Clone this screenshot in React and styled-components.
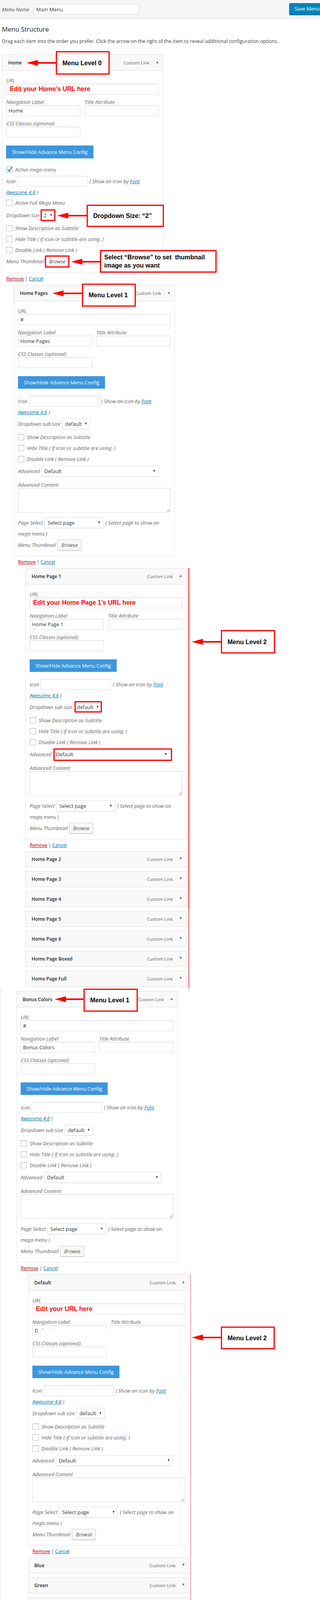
import React from 'react'
import styled, { createGlobalStyle } from 'styled-components'

const GlobalStyle = createGlobalStyle`
  html, body { margin: 0; padding: 0; background: #fff; }
  body { font-family: "Open Sans", "Noto Sans", sans-serif; color: #444; }
  *, *::before, *::after { box-sizing: border-box; }
`

const Page = styled.div`
  position: relative;
  width: 820px;
  height: 4192px;
  overflow: hidden;
  background: #fff;
`

const TopBar = styled.div`
  display: flex;
  align-items: center;
  height: 48px;
  padding-left: 5px;
  background: #f5f5f5;
  border-bottom: 1px solid #dedede;
`

const NameLabel = styled.span`
  width: 81px;
  font-size: 13px;
  font-style: italic;
  color: #555;
`

const NameInput = styled.input`
  width: 270px;
  height: 26px;
  padding: 0 6px;
  border: 1px solid #ddd;
  background: #fff;
  font-family: inherit;
  font-size: 13px;
  color: #32373c;
  outline: none;
`

const SaveButton = styled.button`
  margin-left: auto;
  margin-right: -12px;
  margin-top: -2px;
  width: 91px;
  height: 30px;
  padding: 0 0 0 13px;
  text-align: left;
  background: #0085ba;
  border: 1px solid #0073aa;
  border-bottom-color: #006799;
  border-radius: 3px;
  box-shadow: 0 1px 0 #006799;
  color: #fff;
  font-family: inherit;
  font-size: 12.5px;
`

const Section = styled.div`
  padding-left: 5px;
`

const LowerSection = styled.div`
  margin-left: 1px;
  padding: 7px 0 0 10px;
  border-left: 1px solid #dcdcdc;
`

const Heading = styled.h2`
  margin: 16px 0 0;
  font-size: 16.5px;
  font-weight: 400;
  line-height: 22px;
  color: #23282d;
`

const Intro = styled.p`
  margin: 11px 0 24px;
  font-size: 12.4px;
  line-height: 18px;
  color: #444;
`

const Item = styled.div`
  position: relative;
  width: 413px;
  margin-left: ${p => p.$indent || 0}px;
`

const Handle = styled.div`
  display: flex;
  align-items: center;
  height: ${p => (p.$open ? 42 : 41)}px;
  padding: 0 11px 0 15px;
  background: #f9f9f9;
  border: 1px solid #dfdfdf;
`

const ItemTitle = styled.span`
  flex: 1;
  font-size: 12px;
  font-weight: 600;
  color: #23282d;
`

const ItemType = styled.span`
  font-size: 11.5px;
  color: #666;
`

const Toggle = styled.span`
  width: 0;
  height: 0;
  margin: -3px 0 0 17px;
  border-left: 3.5px solid transparent;
  border-right: 3.5px solid transparent;
  ${p => (p.$open ? 'border-bottom: 6px solid #72777c;' : 'border-top: 6px solid #72777c;')}
`

const Settings = styled.div`
  padding: 17px 10px ${p => p.$pb ?? 14}px;
  border: 1px solid #e5e5e5;
  border-top: none;
  background: #fff;
`

const FieldLabel = styled.div`
  margin-top: ${p => p.$mt || 0}px;
  font-size: 13px;
  font-style: italic;
  line-height: 16px;
  color: #666;
`

const Pair = styled.div`
  display: grid;
  grid-template-columns: 1fr 1fr;
  column-gap: 11px;
  margin-top: 11px;
`

const TextInput = styled.input`
  display: block;
  width: ${p => (p.$w ? `${p.$w}px` : '100%')};
  height: 28px;
  margin: 0;
  padding: 0 ${p => (p.$note ? 8 : 5)}px;
  border: 1px solid #ddd;
  box-shadow: inset 0 1px 2px rgba(0, 0, 0, 0.07);
  background: #fff;
  font-family: ${p => (p.$note ? '"Liberation Sans", Arial, sans-serif' : 'inherit')};
  font-size: ${p => (p.$note ? 16 : 13)}px;
  font-weight: ${p => (p.$note ? 700 : 400)};
  color: ${p => (p.$note ? '#f00' : '#32373c')};
  outline: none;
  flex: none;
`

const TextArea = styled.textarea`
  display: block;
  width: 100%;
  height: 63px;
  margin: 0;
  border: 1px solid #ddd;
  box-shadow: inset 0 1px 2px rgba(0, 0, 0, 0.07);
  background: #fff;
  resize: both;
`

const ConfigButton = styled.button`
  display: block;
  height: 32px;
  margin-top: 21px;
  padding: 0 15px;
  border: none;
  background: #3d96db;
  color: #fff;
  font-family: inherit;
  font-size: 12.5px;
  ${p => p.$outlined && 'box-shadow: 0 0 0 1px #9cc8ec;'}
`

const Row = styled.div`
  position: relative;
  display: flex;
  align-items: center;
  height: 28px;
  margin-top: ${p => p.$mt || 0}px;
`

const RowLabel = styled.span`
  margin-right: 4px;
  font-size: 13px;
  font-style: italic;
  color: #666;
  white-space: nowrap;
`

const Hint = styled.span`
  margin-left: 5px;
  font-size: 13px;
  font-style: italic;
  color: #666;
  white-space: nowrap;
`

const HintLine = styled.div`
  margin-top: 4px;
  font-size: 13px;
  font-style: italic;
  line-height: 20px;
  color: #666;
`

const DocLink = styled.a`
  color: #0073aa;
  text-decoration: underline;
`

const Select = styled.div`
  position: relative;
  display: flex;
  align-items: center;
  flex: none;
  width: ${p => p.$w}px;
  height: 28px;
  padding-left: ${p => p.$pl ?? 7}px;
  border: 1px solid #ddd;
  box-shadow: 0 1px 2px rgba(0, 0, 0, 0.07);
  background: #fff;
  font-size: 13px;
  font-style: normal;
  color: #32373c;
  &::after {
    content: '';
    position: absolute;
    right: ${p => p.$ar ?? 8}px;
    top: 50%;
    margin-top: -3px;
    border-left: 2.5px solid transparent;
    border-right: 2.5px solid transparent;
    border-top: 6px solid #23282d;
  }
`

const CheckRow = styled.div`
  display: flex;
  align-items: center;
  height: 28px;
  margin-top: ${p => p.$mt || 0}px;
  font-size: 13px;
  font-style: italic;
  color: #666;
`

const CheckList = styled.div`
  margin-top: ${p => p.$mt || 0}px;
`

const CheckBox = styled.span`
  position: relative;
  flex: none;
  width: 16px;
  height: 16px;
  margin-right: 7px;
  border: 1px solid #b4b9be;
  background: #fff;
  box-shadow: inset 0 1px 2px rgba(0, 0, 0, 0.1);
`

const TickSvg = styled.svg`
  position: absolute;
  left: 0;
  top: -1px;
`

const BrowseButton = styled.button`
  flex: none;
  width: ${p => p.$w || 62}px;
  height: 28px;
  padding: 0;
  border: 1px solid #ccc;
  border-radius: 3px;
  background: #f7f7f7;
  box-shadow: 0 1px 0 #ccc;
  font-family: inherit;
  font-size: 13px;
  font-style: italic;
  color: #555;
`

const Highlight = styled.span`
  position: relative;
  display: inline-flex;
  &::after {
    content: '';
    position: absolute;
    inset: ${p => p.$inset};
    border: 3px solid #f00;
    pointer-events: none;
  }
`

const Actions = styled.div`
  margin: 5px 0 5px ${p => (p.$indent || 0) + 11}px;
  font-size: 12px;
  line-height: 20px;
  color: #555;
`

const RemoveLink = styled.a`
  color: #a00;
  text-decoration: underline;
`

const CancelLink = styled.a`
  color: #0073aa;
  text-decoration: underline;
`

const Branch = styled.div`
  position: relative;
  width: ${p => 413 + p.$gap + p.$weight}px;
  margin-left: 60px;
  padding-right: ${p => p.$gap}px;
  padding-bottom: ${p => p.$tail}px;
  border-right: ${p => p.$weight}px solid ${p => p.$color};
  ${p => p.$fade && `border-image: linear-gradient(to bottom, ${p.$color} 81%, #e24b4b 81%) 1;`}
`

const Collapsed = styled.div`
  display: flex;
  flex-direction: column;
  gap: 10px;
`

const Callout = styled.div`
  position: absolute;
  z-index: 3;
  left: ${p => p.$x}px;
  top: ${p => p.$y}px;
  width: ${p => p.$w}px;
  height: ${p => p.$h}px;
  display: flex;
  flex-direction: column;
  justify-content: center;
  padding-left: ${p => p.$pad ?? 14}px;
  border: 3px solid #f00;
  background: #fff;
  font-family: "Liberation Sans", Arial, sans-serif;
  font-size: 16px;
  font-weight: 700;
  line-height: 21px;
  color: #000;
  white-space: nowrap;
`

const PointerSvg = styled.svg`
  position: absolute;
  z-index: 3;
  left: ${p => p.$x}px;
  top: ${p => p.$y - 8}px;
`

const CropGap = styled.div`
  position: absolute;
  left: 25px;
  top: 140px;
  width: 386px;
  height: 18px;
  background: #fff;
`

const BUTTON_TEXT = 'Show/Hide Advance Menu Config'

function Pointer({ x, y, to }) {
  const w = to - x
  return (
    <PointerSvg $x={x} $y={y} width={w} height={16} viewBox={`0 0 ${w} 16`}>
      <polygon points="0,8 29,0.5 29,15.5" fill="#f00" />
      <rect x="27" y="6" width={w - 27} height="4" fill="#f00" />
    </PointerSvg>
  )
}

function ItemHead({ title, open }) {
  return (
    <Handle $open={open}>
      <ItemTitle>{title}</ItemTitle>
      <ItemType>Custom Link</ItemType>
      <Toggle $open={open} />
    </Handle>
  )
}

function Tick() {
  return (
    <TickSvg width="16" height="16" viewBox="0 0 16 16">
      <path d="M2.5 7.5 L6.5 12.5 L13.5 1" fill="none" stroke="#1e8cbe" strokeWidth="2.4" />
    </TickSvg>
  )
}

function BasicFields({ note, label }) {
  return (
    <>
      <FieldLabel>URL</FieldLabel>
      <TextInput readOnly value={note || '#'} $note={!!note} />
      <Pair>
        <div>
          <FieldLabel>Navigation Label</FieldLabel>
          <TextInput readOnly value={label} />
        </div>
        <div>
          <FieldLabel>Title Attribute</FieldLabel>
          <TextInput readOnly value="" />
        </div>
      </Pair>
      <Pair>
        <div>
          <FieldLabel>CSS Classes (optional)</FieldLabel>
          <TextInput readOnly value="" />
        </div>
      </Pair>
    </>
  )
}

function IconField({ mt }) {
  return (
    <>
      <Row $mt={mt}>
        <RowLabel>Icon</RowLabel>
        <TextInput readOnly value="" $w={180} />
        <Hint>( Show an icon by <DocLink>Font</DocLink></Hint>
      </Row>
      <HintLine>
        <DocLink>Awesome 4.6</DocLink> )
      </HintLine>
    </>
  )
}

function Checks({ mt }) {
  return (
    <CheckList $mt={mt}>
      <CheckRow><CheckBox />Show Description as Subtitle</CheckRow>
      <CheckRow><CheckBox />Hide Title ( If icon or subtitle are using. )</CheckRow>
      <CheckRow><CheckBox />Disable Link ( Remove Link )</CheckRow>
    </CheckList>
  )
}

function Mark({ inset, children }) {
  if (!inset) return children
  return <Highlight $inset={inset}>{children}</Highlight>
}

function SubMenuFields({ marks = {} }) {
  return (
    <>
      <IconField mt={18} />
      <Row $mt={6}>
        <RowLabel>Dropdown sub size</RowLabel>
        <Mark inset={marks.size}>
          <Select $w={72}>default</Select>
        </Mark>
      </Row>
      <Checks mt={6} />
      <Row $mt={3}>
        <RowLabel>Advanced</RowLabel>
        <Mark inset={marks.advanced}>
          <Select $w={300}>Default</Select>
        </Mark>
      </Row>
      <FieldLabel $mt={13}>Advanced Content</FieldLabel>
      <TextArea readOnly />
      <Row $mt={12}>
        <RowLabel>Page Select</RowLabel>
        <Select $w={151}>Select page</Select>
        <Hint>( Select page to show on</Hint>
      </Row>
      <HintLine>mega menu )</HintLine>
      <Row $mt={5}>
        <RowLabel>Menu Thumbnail</RowLabel>
        <BrowseButton>Browse</BrowseButton>
      </Row>
    </>
  )
}

function ItemActions({ indent }) {
  return (
    <Actions $indent={indent}>
      <RemoveLink>Remove</RemoveLink> | <CancelLink>Cancel</CancelLink>
    </Actions>
  )
}

function SubItem({ title, note, indent = 0, marks, children }) {
  return (
    <Item $indent={indent}>
      <ItemHead title={title} open />
      <Settings>
        <BasicFields note={note} label={title} />
        <ConfigButton>{BUTTON_TEXT}</ConfigButton>
        <SubMenuFields marks={marks} />
      </Settings>
      {children}
    </Item>
  )
}

const homePages = ['Home Page 2', 'Home Page 3', 'Home Page 4', 'Home Page 5', 'Home Page 6', 'Home Page Boxed', 'Home Page Full']
const colors = ['Blue', 'Green', 'Tangerine', 'Emerald']

export default function App() {
  return (
    <Page>
      <GlobalStyle />
      <TopBar>
        <NameLabel>Menu Name</NameLabel>
        <NameInput readOnly value="Main Menu" />
        <SaveButton>Save Menu</SaveButton>
      </TopBar>

      <Section>
        <Heading>Menu Structure</Heading>
        <Intro>
          Drag each item into the order you prefer. Click the arrow on the right of the item to reveal additional configuration options.
        </Intro>

        <Item>
          <ItemHead title="Home" open />
          <Pointer x={63} y={22} to={138} />
          <Callout $x={138} $y={-8} $w={138} $h={60}>Menu Level 0</Callout>
          <Settings $pb={15}>
            <BasicFields note="Edit your Home’s URL here" label="Home" />
            <ConfigButton $outlined>{BUTTON_TEXT}</ConfigButton>
            <CheckRow $mt={15}>
              <CheckBox><Tick /></CheckBox>
              Active mega menu
            </CheckRow>
            <IconField mt={2} />
            <CheckRow $mt={3}><CheckBox />Active Full Mega Menu</CheckRow>
            <Row $mt={4}>
              <RowLabel>Dropdown Size</RowLabel>
              <Highlight $inset="-1px -2px -1px -2px">
                <Select $w={34} $pl={5} $ar={6}>2</Select>
              </Highlight>
              <Pointer x={130} y={15} to={206} />
              <Callout $x={206} $y={-13} $w={198} $h={57}>Dropdown Size: “2”</Callout>
            </Row>
            <Checks mt={5} />
            <Row $mt={1}>
              <RowLabel>Menu Thumbnail</RowLabel>
              <Highlight $inset="-1px -2px -2px -2px">
                <BrowseButton $w={59}>Browse</BrowseButton>
              </Highlight>
              <Pointer x={166} y={15} to={240} />
              <Callout $x={240} $y={-15} $w={299} $h={58} $pad={8}>
                <span>Select “Browse” to set {'\u00a0'}thumbnail</span>
                <span>image as you want</span>
              </Callout>
            </Row>
          </Settings>
        </Item>
        <ItemActions />

        <SubItem title="Home Pages" indent={30}>
          <Pointer x={99} y={22} to={175} />
          <Callout $x={175} $y={-3} $w={138} $h={59}>Menu Level 1</Callout>
        </SubItem>
        <ItemActions indent={30} />

        <Branch $gap={5} $weight={2} $color="#f00" $tail={4} $fade>
          <Pointer x={426} y={189} to={501} />
          <Callout $x={501} $y={159} $w={139} $h={60}>Menu Level 2</Callout>
          <SubItem
            title="Home Page 1"
            note="Edit your Home Page 1’s URL here"
            marks={{ size: '-1px 0 0 2px', advanced: '-1px -5px -3px 1px' }}
          />
          <ItemActions />
          <Collapsed>
            {homePages.map(t => (
              <Item key={t}>
                <ItemHead title={t} />
              </Item>
            ))}
          </Collapsed>
        </Branch>
      </Section>

      <LowerSection>
        <SubItem title="Bonus Colors" indent={30}>
          <Pointer x={98} y={21} to={172} />
          <Callout $x={172} $y={-6} $w={139} $h={59}>Menu Level 1</Callout>
        </SubItem>
        <ItemActions indent={30} />

        <Branch $gap={3} $weight={1} $color="#ea4b55" $tail={1}>
          <Pointer x={419} y={162} to={494} />
          <Callout $x={494} $y={134} $w={138} $h={58}>Menu Level 2</Callout>
          <SubItem title="Default" note="Edit your URL here">
            <CropGap />
          </SubItem>
          <ItemActions />
          <Collapsed>
            {colors.map(t => (
              <Item key={t}>
                <ItemHead title={t} />
              </Item>
            ))}
          </Collapsed>
        </Branch>
        <Item $indent={60} style={{ marginTop: 4 }}>
          <Handle />
        </Item>
      </LowerSection>
    </Page>
  )
}
